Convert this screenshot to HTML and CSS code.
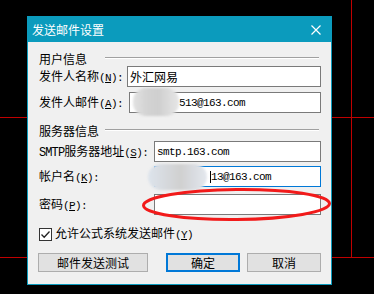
FILE: index.html
```html
<!DOCTYPE html>
<html lang="zh-CN">

<head>
     <meta charset="UTF-8">
     <meta name="viewport" content="width=device-width, initial-scale=1.0">
     <title>发送邮件设置</title>
     <link rel="stylesheet" href="styles.css">
</head>

<body>
     <!-- red guide lines on the desktop -->
     <div class="guide guide-top"></div>
     <div class="guide guide-bottom"></div>
     <div class="guide guide-side"></div>

     <div class="dialog">
          <div class="titlebar">
               <span class="title">发送邮件设置</span>
               <svg class="close" width="10" height="10" viewBox="0 0 10 10">
                    <path d="M0.5 0.5 L9.5 9.5 M9.5 0.5 L0.5 9.5" stroke="#fff" stroke-width="1.2" fill="none" />
               </svg>
          </div>

          <div class="content">
               <div class="group">
                    <span class="group-name">用户信息</span>
                    <span class="rule"></span>
               </div>
               <div class="field">
                    <label class="lbl-name">发件人名称<span class="lat">(<u>N</u>):</span></label>
                    <div class="input">外汇网易</div>
               </div>
               <div class="field gap-5">
                    <label class="lbl-mail">发件人邮件<span class="lat">(<u>A</u>):</span></label>
                    <div class="input mono pad-mail">
                         <span class="blob blob-mail"></span>513@163.com
                    </div>
               </div>

               <div class="group group-server">
                    <span class="group-name">服务器信息</span>
                    <span class="rule"></span>
               </div>
               <div class="field gap-3">
                    <label class="lbl-server"><span class="caps">SMTP</span>服务器地址<span class="lat">(<u>S</u>):</span></label>
                    <div class="input mono">smtp.163.com</div>
               </div>
               <div class="field gap-4">
                    <label class="lbl-server">帐户名<span class="lat">(<u>K</u>):</span></label>
                    <div class="input mono focus pad-user">
                         <span class="blob blob-user"></span><span class="caret"></span>13@163.com
                    </div>
               </div>
               <div class="field gap-7">
                    <label class="lbl-server">密码<span class="lat">(<u>P</u>):</span></label>
                    <div class="input"></div>
               </div>

               <div class="check">
                    <span class="box">
                         <svg width="11" height="11" viewBox="0 0 11 11">
                              <path d="M1.5 5.5 L4.2 8.3 L9.5 2.5" stroke="#222" stroke-width="1.3" fill="none" />
                         </svg>
                    </span>
                    <span>允许公式系统发送邮件<span class="lat">(<u>Y</u>)</span></span>
               </div>

               <div class="buttons">
                    <div class="btn btn-test">邮件发送测试</div>
                    <div class="btn btn-ok">确定</div>
                    <div class="btn btn-cancel">取消</div>
               </div>
          </div>
     </div>

     <!-- hand drawn red mark round the password box -->
     <svg class="mark" width="374" height="294" viewBox="0 0 374 294">
          <ellipse cx="236.5" cy="204.5" rx="93" ry="15" transform="rotate(-0.6 236.5 204.5)"
               stroke="#f21a1a" stroke-width="3" fill="none" />
     </svg>
</body>

</html>
```

FILE: styles.css
```css
* {
     padding: 0;
     margin: 0;
     box-sizing: border-box;
}

html,
body {
     width: 374px;
     height: 294px;
     overflow: hidden;
}

body {
     position: relative;
     background: #000;
     font-family: "Noto Sans CJK SC", sans-serif;
     font-size: 12px;
     line-height: 14px;
     color: #000;
}

.guide {
     position: absolute;
     background: #c00000;
}

.guide-top {
     left: 0;
     top: 117px;
     width: 374px;
     height: 1px;
}

.guide-bottom {
     left: 0;
     top: 257px;
     width: 374px;
     height: 1px;
}

.guide-side {
     left: 351px;
     top: 0;
     width: 1px;
     height: 257px;
}

.dialog {
     position: absolute;
     left: 27px;
     top: 16px;
     width: 305px;
     height: 269px;
     border: 1px solid #0b9bbd;
     background: #f0f0f0;
     display: flex;
     flex-direction: column;
}

.titlebar {
     height: 25px;
     flex: none;
     background: #0b9bbd;
     color: #fff;
     display: flex;
     align-items: center;
     justify-content: space-between;
     padding: 0 10px 0 4px;
}

.title {
     font-size: 12px;
}

.close {
     display: block;
}

.content {
     flex: 1;
     display: flex;
     flex-direction: column;
     padding: 10px 10px 0 11px;
}

.group {
     height: 14px;
     display: flex;
}

.group-server {
     margin-top: 11px;
}

.group-name {
     width: 66px;
     flex: none;
}

.rule {
     flex: 1;
     height: 2px;
     margin: 5px 2px 0 0;
     border-top: 1px solid #a0a0a0;
     border-bottom: 1px solid #fff;
}

.field {
     height: 21px;
     display: flex;
     align-items: center;
}

.gap-3 {
     margin-top: 3px;
}

.gap-4 {
     margin-top: 4px;
}

.gap-5 {
     margin-top: 5px;
}

.gap-7 {
     margin-top: 7px;
}

.field label {
     flex: none;
     white-space: nowrap;
}

.lat {
     font-family: "Liberation Mono", monospace;
     font-size: 11px;
     letter-spacing: -0.6px;
}

.caps {
     font-family: "Liberation Mono", monospace;
     font-size: 12px;
     letter-spacing: -0.9px;
}

.lbl-name {
     width: 88px;
}

.lbl-mail {
     width: 90px;
}

.lbl-server {
     width: 115px;
}

.input {
     position: relative;
     flex: 1;
     height: 21px;
     background: #fff;
     border: 1px solid #7a7a7a;
     padding: 0 2px;
     display: flex;
     align-items: center;
     white-space: nowrap;
}

.input.focus {
     border-color: #0078d7;
}

.mono {
     font-family: "Liberation Mono", monospace;
     font-size: 11px;
     letter-spacing: -0.6px;
}

.pad-mail {
     padding-left: 49px;
}

.pad-user {
     padding-left: 55px;
}

.caret {
     width: 1px;
     height: 12px;
     background: #000;
}

.blob {
     position: absolute;
     border-radius: 13px;
     filter: blur(1.2px);
}

.blob-mail {
     left: 3px;
     top: -5px;
     width: 46px;
     height: 28px;
     background:
          linear-gradient(90deg, #e2e2e2 0, #d3d3d3 30%, #cfcfcf 55%, #dcdcdc 80%, #e6e6e6 100%);
}

.blob-user {
     left: -7px;
     top: -3px;
     width: 59px;
     height: 26px;
     background:
          linear-gradient(90deg, #dde4ec 0, #d6d9dd 30%, #d0d0d0 55%, #dadde2 80%, #e4e8ee 100%);
}

.check {
     height: 14px;
     margin-top: 12px;
     display: flex;
     align-items: center;
     gap: 3px;
}

.box {
     width: 13px;
     height: 13px;
     border: 1px solid #333;
     background: #fff;
     display: flex;
     align-items: center;
     justify-content: center;
}

.box svg {
     display: block;
}

.buttons {
     display: flex;
     margin-top: 12px;
     margin-left: -1px;
}

.btn {
     height: 19px;
     border: 1px solid #adadad;
     background: #e1e1e1;
     display: flex;
     align-items: center;
     justify-content: center;
}

.btn-test {
     width: 110px;
}

.btn-ok {
     width: 74px;
     margin-left: 18px;
     border: 2px solid #0078d7;
}

.btn-cancel {
     width: 74px;
     margin-left: 7px;
}

.mark {
     position: absolute;
     left: 0;
     top: 0;
     pointer-events: none;
}
```
